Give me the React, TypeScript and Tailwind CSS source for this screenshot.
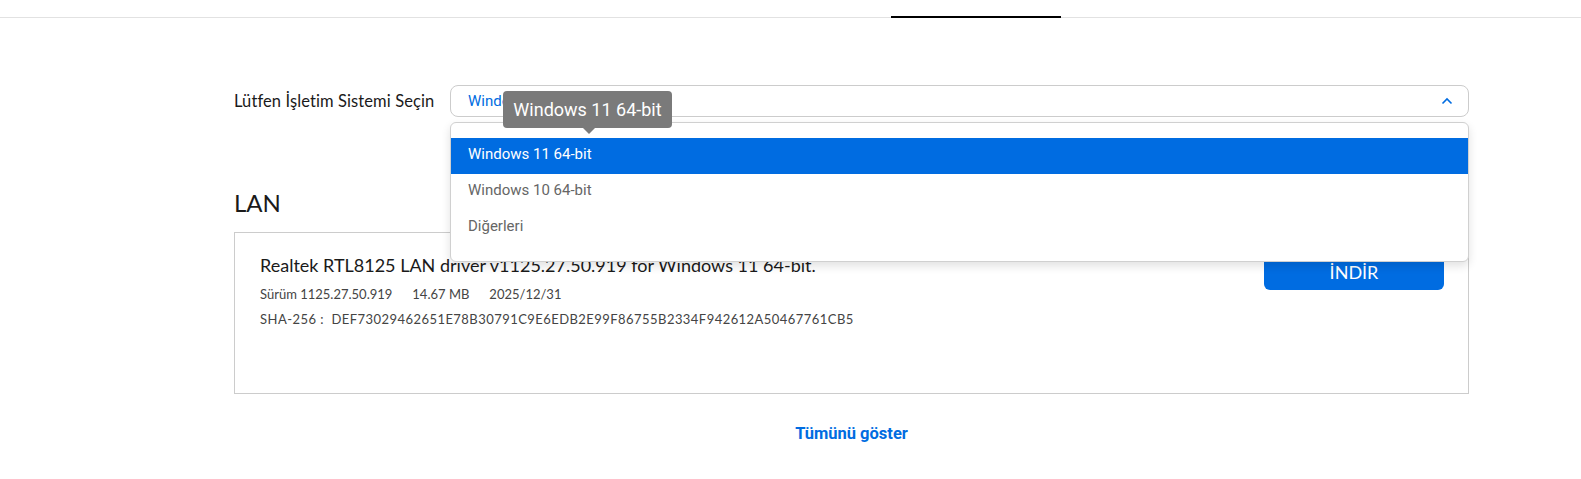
export default function App() {
  const items = ["Windows 11 64-bit", "Windows 10 64-bit", "Diğerleri"];

  return (
    <div className="relative h-[479px] w-[1581px] overflow-hidden bg-white font-['Lato',sans-serif] text-[#1a1a1a]">
      {/* tab bar, only its bottom edge shows */}
      <div className="flex h-[18px] items-end border-b border-[#e2e2e2]">
        <div className="ml-[891px] -mb-px h-[2px] w-[170px] bg-black" />
      </div>

      <div className="ml-[234px] w-[1235px]">
        <div className="mt-[67px] flex items-center">
          <div className="w-[216px] text-[16.5px] tracking-[0.1px]">Lütfen İşletim Sistemi Seçin</div>
          <div className="relative w-[1019px]">
            <div className="flex h-[32px] items-center justify-between rounded-lg border border-[#cccccc] pl-[17px] pr-[15px]">
              <span className="font-['Roboto',sans-serif] text-[15px] text-[#006ce1]">
                Windows 11 64-bit
              </span>
              <svg width="12" height="8" viewBox="0 0 12 8" fill="none">
                <path d="M1.5 6.5 L6 2 L10.5 6.5" stroke="#006ce1" strokeWidth="1.6" />
              </svg>
            </div>

            {/* dropdown list */}
            <div className="absolute left-0 top-[37px] z-10 h-[140px] w-full rounded-md border border-[#d0d0d0] bg-white py-[15px] shadow-[0_4px_10px_rgba(0,0,0,0.12)]">
              {items.map((item, i) => (
                <div
                  key={item}
                  className={
                    i === 0
                      ? "flex h-[36px] items-center bg-[#006ce1] px-[17px] pb-[3px] font-['Roboto',sans-serif] text-[15px] text-white"
                      : "flex h-[36px] items-center px-[17px] pb-[3px] font-['Roboto',sans-serif] text-[15px] text-[#666666]"
                  }
                >
                  {item}
                </div>
              ))}
            </div>

            {/* tooltip */}
            <div className="absolute left-[53px] top-[6px] z-20 flex h-[37px] w-[169px] items-center justify-center rounded-[4px] bg-[#7a7a7a] font-['Roboto',sans-serif] text-[18px] text-white">
              Windows 11 64-bit
              <div className="absolute left-[80px] top-[37px] h-0 w-0 border-x-[6px] border-t-[6px] border-x-transparent border-t-[#7a7a7a]" />
            </div>
          </div>
        </div>

        <h2 className="mt-[70px] text-[24px] leading-[32px] text-[#1a1a1a]">LAN</h2>

        <div className="mt-[13px] flex h-[162px] justify-between border border-[#cccccc] px-[24px] pt-[22px]">
          <div className="-mt-[3px] pl-[1px]">
            <div className="text-[18px] leading-[26px] text-[#1a1a1a]">
              Realtek RTL8125 LAN driver v1125.27.50.919 for Windows 11 64-bit.
            </div>
            <div className="mt-[6px] flex gap-[20px] text-[13px] leading-[20px] text-[#444444]">
              <span>Sürüm 1125.27.50.919</span>
              <span>14.67 MB</span>
              <span>2025/12/31</span>
            </div>
            <div className="mt-[5px] text-[13px] leading-[20px] tracking-[0.45px] text-[#444444]">
              SHA-256 :&nbsp;&nbsp;DEF73029462651E78B30791C9E6EDB2E99F86755B2334F942612A50467761CB5
            </div>
          </div>
          <button className="h-[35px] w-[180px] rounded-md bg-[#006ce1] text-[18px] text-white">
            İNDİR
          </button>
        </div>

        <div className="mt-[28px] text-center font-['Roboto',sans-serif] text-[16.5px] font-bold text-[#006ce1]">
          Tümünü göster
        </div>
      </div>
    </div>
  );
}
